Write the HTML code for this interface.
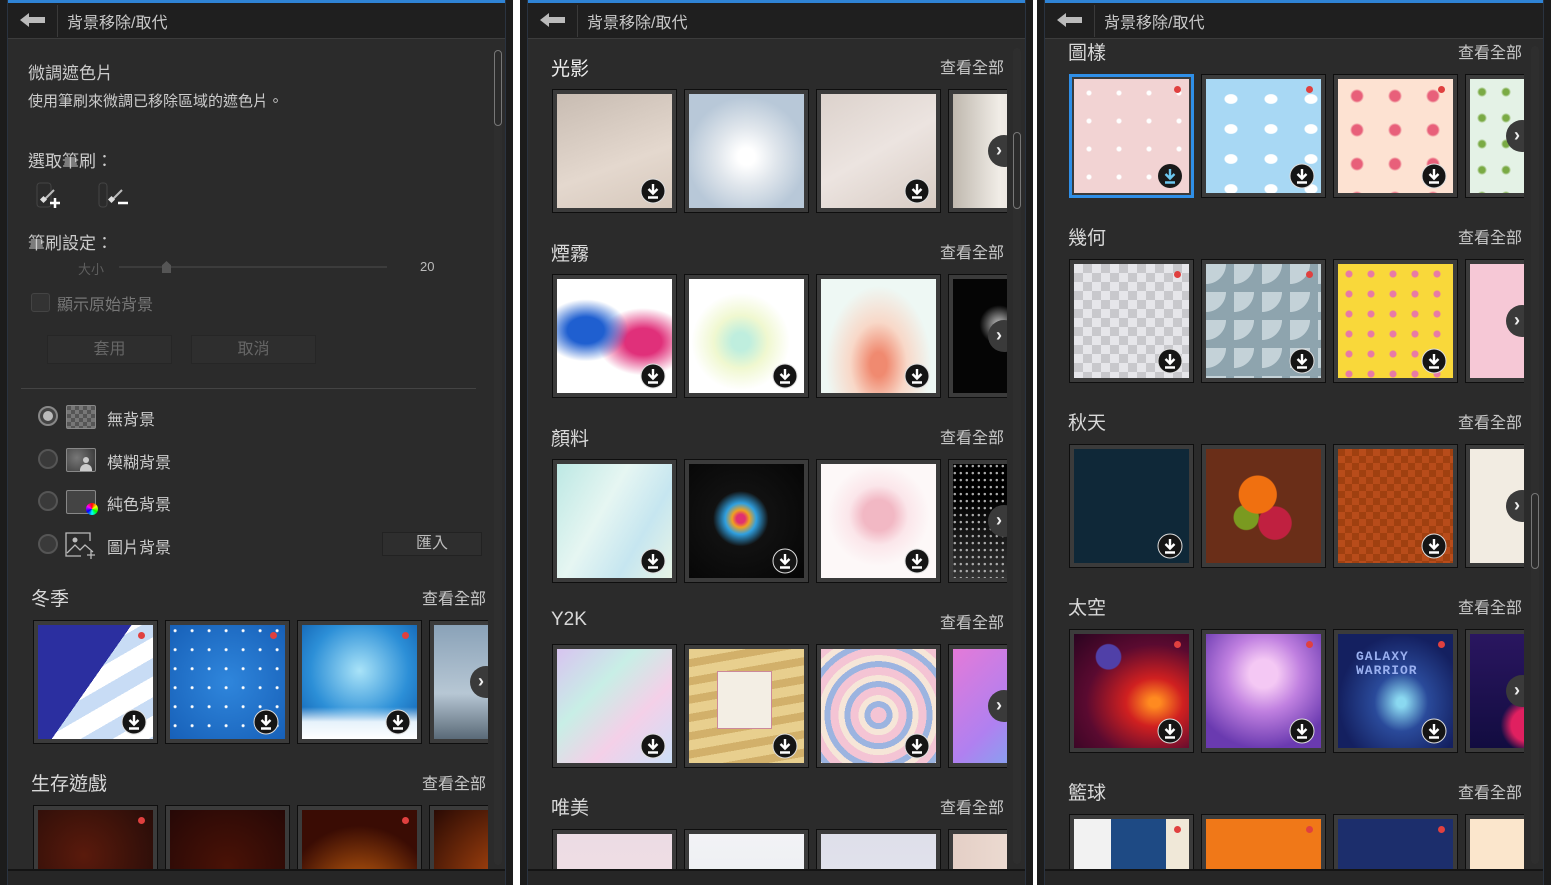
<!DOCTYPE html>
<html><head><meta charset="utf-8"><style>
*{margin:0;padding:0;box-sizing:border-box}
html,body{width:1551px;height:885px;overflow:hidden}
body{background:#fff;position:relative;font-family:"Liberation Sans","Noto Sans CJK TC",sans-serif;color:#ccc}
.p{position:absolute;top:0;height:885px;background:#1c1c1c;overflow:hidden}
.in{position:absolute;left:7px;right:7px;top:0;bottom:0;background:#2b2b2b;overflow:hidden;border-left:1px solid #2a3340;border-right:1px solid #2a3340}
.blue{position:absolute;left:0;right:0;top:0;height:3px;background:#2f84d6}
.hd{position:absolute;left:0;right:0;top:3px;height:36px;background:#1f1f1f;border-bottom:1px solid #3c3c3c}
.hd .ar{position:absolute;left:11px;top:9px}
.hd .dv{position:absolute;left:49px;top:2px;width:1px;height:32px;background:#3a3a3a}
.hd .tt{position:absolute;left:59px;top:6px;font-size:16px;color:#c8c8c8}
.bt{position:absolute;left:0;right:0;top:869px;bottom:0;background:#262626;border-top:2px solid #141414}
.sb{position:absolute;width:8px;background:#333;border-radius:4px}
.th{position:absolute;left:0;width:8px;background:#2b2b2b;border:1px solid #777;border-radius:4px}
.a{position:absolute;white-space:nowrap}
.sec{font-size:19px;color:#d8d8d8}
.all{font-size:16px;color:#c8c8c8}
.row{position:absolute;height:124px;overflow:hidden}
.t{position:absolute;top:0;width:125px;height:124px;border:1px solid #0e0e0e;background:#3b3b3b;padding:4px}
.t .i{width:100%;height:100%;position:relative;overflow:hidden}
.t.sel{border:3px solid #2f8fe8;padding:2px}
.dot{position:absolute;right:8px;top:7px;width:7px;height:7px;border-radius:50%;background:#e0403f}
.cv{position:absolute;top:46px;width:32px;height:32px;border-radius:50%;background:#3a3a3a;color:#eee;font-size:18px;line-height:30px;text-align:left;padding-left:8px;font-weight:bold}
.btn{position:absolute;height:29px;border:1px solid #262626;background:#2e2e2e;color:#666;font-size:16px;text-align:center;line-height:27px}
.rad{position:absolute;left:30px;width:20px;height:20px;border-radius:50%;border:2px solid #555;background:#3a3a3a}
</style></head><body>

<!-- PANEL 1 -->
<div class="p" style="left:0;width:513px">
<div class="in">
<div class="blue"></div>
<div class="hd"><svg class="ar" width="28" height="16" viewBox="0 0 28 16"><path d="M1 8L10 1v4h16v6H10v4z" fill="#bbb"/></svg><div class="dv"></div><div class="tt">背景移除/取代</div></div>
<div class="sb" style="left:486px;top:50px;height:815px;background:#2e2e2e"></div>
<div class="th" style="left:486px;top:50px;height:76px"></div>
<div class="a" style="left:20px;top:59px;font-size:17px;color:#ccc">微調遮色片</div>
<div class="a" style="left:20px;top:90px;font-size:15px;color:#ccc">使用筆刷來微調已移除區域的遮色片。</div>
<div class="a" style="left:20px;top:147px;font-size:17px;color:#ccc">選取筆刷：</div>
<svg class="a" style="left:28px;top:182px" width="40" height="28" viewBox="0 0 40 28"><rect x="1" y="1" width="14" height="24" rx="3" fill="none" stroke="#444"/><path d="M8 18l10-10" stroke="#bbb" stroke-width="2"/><rect x="5" y="15" width="5" height="5" fill="#ddd" transform="rotate(45 7.5 17.5)"/><path d="M14 21h10M19 16v10" stroke="#fff" stroke-width="2.5"/></svg>
<svg class="a" style="left:90px;top:182px" width="40" height="28" viewBox="0 0 40 28"><rect x="1" y="1" width="8" height="24" rx="3" fill="none" stroke="#444"/><path d="M14 18l10-10" stroke="#bbb" stroke-width="2"/><rect x="11" y="15" width="5" height="5" fill="#ddd" transform="rotate(45 13.5 17.5)"/><path d="M20 21h10" stroke="#fff" stroke-width="2.5"/></svg>
<div class="a" style="left:20px;top:229px;font-size:17px;color:#ccc">筆刷設定：</div>
<div class="a" style="left:70px;top:259px;font-size:13px;color:#5e5e5e">大小</div>
<div class="a" style="left:111px;top:266px;width:268px;height:2px;background:#3c3c3c"></div>
<div class="a" style="left:154px;top:261px;width:9px;height:12px;background:#555;clip-path:polygon(50% 0,100% 35%,100% 100%,0 100%,0 35%)"></div>
<div class="a" style="left:412px;top:259px;font-size:13px;color:#bbb">20</div>
<div class="a" style="left:23px;top:293px;width:19px;height:19px;border:1px solid #444;background:#333;border-radius:3px"></div>
<div class="a" style="left:49px;top:291px;font-size:16px;color:#777">顯示原始背景</div>
<div class="btn" style="left:39px;top:335px;width:125px">套用</div>
<div class="btn" style="left:183px;top:335px;width:125px">取消</div>
<div class="a" style="left:13px;top:388px;width:455px;height:1px;background:#444"></div>

<div class="rad" style="top:406px;border-color:#888;background:#444"><div style="margin:3px;width:10px;height:10px;border-radius:50%;background:#bbb"></div></div>
<div class="a" style="left:58px;top:405px;width:30px;height:24px;border:1px solid #888;border-radius:2px;background:repeating-conic-gradient(#777 0 25%,#555 0 50%) 0 0/8px 8px"></div>
<div class="a" style="left:99px;top:406px;font-size:16px;color:#ccc">無背景</div>

<div class="rad" style="top:449px"></div>
<div class="a" style="left:58px;top:448px;width:30px;height:24px;border:1px solid #888;border-radius:2px;background:radial-gradient(circle at 35% 40%,#777,#333)"><div style="position:absolute;right:3px;bottom:0;width:12px;height:7px;border-radius:6px 6px 0 0;background:#ccc"></div><div style="position:absolute;right:6px;bottom:8px;width:6px;height:6px;border-radius:50%;background:#ccc"></div></div>
<div class="a" style="left:99px;top:449px;font-size:16px;color:#ccc">模糊背景</div>

<div class="rad" style="top:491px"></div>
<div class="a" style="left:58px;top:490px;width:30px;height:24px;border:1px solid #888;border-radius:2px;background:#444"></div>
<div class="a" style="left:78px;top:503px;width:12px;height:12px;border-radius:50%;background:conic-gradient(red,yellow,lime,cyan,blue,magenta,red)"></div>
<div class="a" style="left:99px;top:491px;font-size:16px;color:#ccc">純色背景</div>

<div class="rad" style="top:534px"></div>
<svg class="a" style="left:57px;top:532px" width="32" height="28" viewBox="0 0 32 28"><path d="M25 9V1H1v23h15" fill="none" stroke="#bbb" stroke-width="1.3"/><circle cx="10" cy="8" r="2.5" fill="#bbb"/><path d="M2 21l8-8 5 5 5-5 8 7" fill="none" stroke="#bbb" stroke-width="1.3"/><path d="M26 19v8M22 23h8" stroke="#bbb" stroke-width="1.3"/></svg>
<div class="a" style="left:99px;top:534px;font-size:16px;color:#ccc">圖片背景</div>
<div class="btn" style="left:374px;top:532px;width:100px;height:24px;line-height:22px;color:#bbb;border-color:#222;background:#2e2e2e">匯入</div>

<div class="a sec" style="left:23px;top:584px">冬季</div>
<div class="a all" style="right:19px;top:585px">查看全部</div>
<div class="row" style="left:25px;top:620px;width:455px">
 <div class="t" style="left:0"><div class="i" style="background:linear-gradient(125deg,#2b2fa0 48%,transparent 48%),repeating-linear-gradient(150deg,#fff 0 18px,#c8dcf5 18px 34px)"><div class="dot"></div></div></div>
 <div class="t" style="left:132px"><div class="i" style="background:radial-gradient(circle at 30% 30%,#fff 1px,transparent 2px) 0 0/17px 19px,radial-gradient(circle,#2f86dc,#1760b8)"><div class="dot"></div></div></div>
 <div class="t" style="left:264px"><div class="i" style="background:linear-gradient(transparent 72%,#e6f2fb 85%,#fff),radial-gradient(circle at 50% 40%,#a9e3f8,#2c8fd7 55%,#0a55a8)"><div class="dot"></div></div></div>
 <div class="t" style="left:396px"><div class="i" style="background:linear-gradient(#8aa2b8,#b7c7d4 60%,#5a6a78)"></div></div>
 <div class="cv" style="left:437px">›</div>
</div>
<div class="a sec" style="left:23px;top:769px">生存遊戲</div>
<div class="a all" style="right:19px;top:770px">查看全部</div>
<div class="row" style="left:25px;top:805px;width:455px">
 <div class="t" style="left:0"><div class="i" style="background:radial-gradient(circle at 40% 40%,#5a1a0c,#1e0a08)"><div class="dot"></div></div></div>
 <div class="t" style="left:132px"><div class="i" style="background:radial-gradient(#4a1206,#260806)"></div></div>
 <div class="t" style="left:264px"><div class="i" style="background:radial-gradient(circle at 50% 80%,#d66a10,#3a0c04 70%)"><div class="dot"></div></div></div>
 <div class="t" style="left:396px"><div class="i" style="background:radial-gradient(circle at 70% 70%,#c25010,#2a0a04)"></div></div>
</div>
<div class="bt"></div>
</div></div>

<!-- PANEL 2 -->
<div class="p" style="left:520px;width:513px">
<div class="in">
<div class="blue"></div>
<div class="hd"><svg class="ar" width="28" height="16" viewBox="0 0 28 16"><path d="M1 8L10 1v4h16v6H10v4z" fill="#bbb"/></svg><div class="dv"></div><div class="tt">背景移除/取代</div></div>
<div class="sb" style="left:485px;top:48px;height:816px;background:#2e2e2e"></div>
<div class="th" style="left:485px;top:132px;height:77px"></div>

<div class="a sec" style="left:23px;top:54px;color:#eee">光影</div>
<div class="a all" style="right:21px;top:54px">查看全部</div>
<div class="row" style="left:24px;top:89px;width:455px">
 <div class="t" style="left:0"><div class="i" style="background:linear-gradient(160deg,#c8bcb2,#e4d8ce 60%,#d6c8bc)"></div></div>
 <div class="t" style="left:132px"><div class="i" style="background:radial-gradient(circle at 50% 55%,#fff 10%,#e0e6ec 35%,#b8c8d8 70%)"></div></div>
 <div class="t" style="left:264px"><div class="i" style="background:linear-gradient(150deg,#dcd2cc,#ece4e0 50%,#d8ccc4)"></div></div>
 <div class="t" style="left:396px"><div class="i" style="background:linear-gradient(90deg,#bfb8ae,#f0ece6 40%,#cfc8bc)"></div></div>
 <div class="cv" style="left:436px">›</div>
</div>

<div class="a sec" style="left:23px;top:239px">煙霧</div>
<div class="a all" style="right:21px;top:239px">查看全部</div>
<div class="row" style="left:24px;top:274px;width:455px">
 <div class="t" style="left:0"><div class="i" style="background:radial-gradient(ellipse at 25% 45%,#1f5fd0 15%,transparent 35%),radial-gradient(ellipse at 75% 55%,#e0307a 15%,transparent 38%),#fff"></div></div>
 <div class="t" style="left:132px"><div class="i" style="background:radial-gradient(ellipse at 45% 55%,#bfeede 10%,#f0f8d0 30%,#fff 55%)"></div></div>
 <div class="t" style="left:264px"><div class="i" style="background:radial-gradient(ellipse at 50% 75%,#f08a70 10%,#f8d8c8 35%,#eef8f4 65%)"></div></div>
 <div class="t" style="left:396px"><div class="i" style="background:radial-gradient(circle at 40% 40%,#aaa 3%,#050505 20%)"></div></div>
 <div class="cv" style="left:436px">›</div>
</div>

<div class="a sec" style="left:23px;top:424px">顏料</div>
<div class="a all" style="right:21px;top:424px">查看全部</div>
<div class="row" style="left:24px;top:459px;width:455px">
 <div class="t" style="left:0"><div class="i" style="background:linear-gradient(120deg,#bde8e4,#e6f6f2 40%,#c6e6f0 70%,#e8f4e6)"></div></div>
 <div class="t" style="left:132px"><div class="i" style="background:radial-gradient(circle at 45% 48%,#e03070 5%,#f0a020 10%,#30a0e0 18%,#111 32%,#050505)"></div></div>
 <div class="t" style="left:264px"><div class="i" style="background:radial-gradient(circle at 50% 45%,#f2b8c4 18%,#fbe6ea 35%,#fdf8f8 60%)"></div></div>
 <div class="t" style="left:396px"><div class="i" style="background:radial-gradient(circle at 30% 30%,#aaa 1px,transparent 1.5px) 0 0/6px 7px,linear-gradient(#000 30%,#333)"></div></div>
 <div class="cv" style="left:436px">›</div>
</div>

<div class="a sec" style="left:23px;top:609px">Y2K</div>
<div class="a all" style="right:21px;top:609px">查看全部</div>
<div class="row" style="left:24px;top:644px;width:455px">
 <div class="t" style="left:0"><div class="i" style="background:linear-gradient(135deg,#d8c4f0,#c8eee6 35%,#f4d0e8 65%,#cde0f8)"></div></div>
 <div class="t" style="left:132px"><div class="i" style="background:repeating-linear-gradient(170deg,#e8cf8e 0 10px,#d2b06a 10px 18px)"><div style="position:absolute;left:28px;top:22px;width:55px;height:58px;background:#f3eee4;border:1px solid #c89;"></div></div></div>
 <div class="t" style="left:264px"><div class="i" style="background:repeating-radial-gradient(circle at 50% 58%,#f4c4d4 0 8px,#9cb4e0 8px 14px,#f6e6d8 14px 20px)"></div></div>
 <div class="t" style="left:396px"><div class="i" style="background:linear-gradient(135deg,#e47ad8,#b080f0 50%,#60c0f0)"></div></div>
 <div class="cv" style="left:436px">›</div>
</div>

<div class="a sec" style="left:23px;top:793px">唯美</div>
<div class="a all" style="right:21px;top:794px">查看全部</div>
<div class="row" style="left:24px;top:829px;width:455px">
 <div class="t" style="left:0"><div class="i" style="background:linear-gradient(#ecdce4,#f4e0e4)"></div></div>
 <div class="t" style="left:132px"><div class="i" style="background:linear-gradient(#f2f3f6,#e6e8ec)"></div></div>
 <div class="t" style="left:264px"><div class="i" style="background:linear-gradient(#dedfea,#e8e8f0)"></div></div>
 <div class="t" style="left:396px"><div class="i" style="background:linear-gradient(90deg,#e4cfc6,#f4e6dc)"></div></div>
</div>
<div class="bt"></div>
</div></div>

<!-- PANEL 3 -->
<div class="p" style="left:1037px;width:514px">
<div class="in">
<div class="blue"></div>
<div class="hd"><svg class="ar" width="28" height="16" viewBox="0 0 28 16"><path d="M1 8L10 1v4h16v6H10v4z" fill="#bbb"/></svg><div class="dv"></div><div class="tt">背景移除/取代</div></div>
<div class="sb" style="left:486px;top:46px;height:818px;background:#2e2e2e"></div>
<div class="th" style="left:486px;top:493px;height:76px"></div>

<div class="a sec" style="left:23px;top:38px">圖樣</div>
<div class="a all" style="right:21px;top:39px">查看全部</div>
<div class="row" style="left:24px;top:74px;width:455px">
 <div class="t sel" style="left:0"><div class="i" style="background:radial-gradient(circle,#fff 2px,transparent 3px) 0 0/30px 28px,#f2d3d3"><div class="dot"></div></div></div>
 <div class="t" style="left:132px"><div class="i" style="background:radial-gradient(ellipse,#fff 6px,transparent 7px) 5px 5px/40px 30px,#a8d8f4"><div class="dot"></div></div></div>
 <div class="t" style="left:264px"><div class="i" style="background:radial-gradient(circle,#e8607a 5px,transparent 7px) 0 0/38px 34px,#fde2d2"><div class="dot"></div></div></div>
 <div class="t" style="left:396px"><div class="i" style="background:radial-gradient(circle,#7aaa44 3px,transparent 5px) 0 0/24px 26px,#e4f2e6"></div></div>
 <div class="cv" style="left:437px">›</div>
</div>

<div class="a sec" style="left:23px;top:223px">幾何</div>
<div class="a all" style="right:21px;top:224px">查看全部</div>
<div class="row" style="left:24px;top:259px;width:455px">
 <div class="t" style="left:0"><div class="i" style="background:repeating-conic-gradient(#c8c8cc 0 25%,#e6e6ea 0 50%) 0 0/18px 18px"><div class="dot"></div></div></div>
 <div class="t" style="left:132px"><div class="i" style="background:radial-gradient(circle at 0 0,#c4d2d8 50%,transparent 51%) 0 0/28px 28px,#8ea4ae"><div class="dot"></div></div></div>
 <div class="t" style="left:264px"><div class="i" style="background:radial-gradient(circle,#e87aa6 3px,transparent 4px) 0 0/22px 20px,#f9d83a"></div></div>
 <div class="t" style="left:396px"><div class="i" style="background:#f6c8d6"></div></div>
 <div class="cv" style="left:437px">›</div>
</div>

<div class="a sec" style="left:23px;top:408px">秋天</div>
<div class="a all" style="right:21px;top:409px">查看全部</div>
<div class="row" style="left:24px;top:444px;width:455px">
 <div class="t" style="left:0"><div class="i" style="background:#0f2838"></div></div>
 <div class="t" style="left:132px"><div class="i" style="background:radial-gradient(circle at 45% 40%,#f07010 20%,transparent 21%),radial-gradient(circle at 60% 65%,#c02040 16%,transparent 17%),radial-gradient(circle at 35% 60%,#7a9a20 12%,transparent 13%),#6a2e18"></div></div>
 <div class="t" style="left:264px"><div class="i" style="background:repeating-conic-gradient(#b84c1a 0 25%,#a04010 0 50%) 0 0/14px 14px"></div></div>
 <div class="t" style="left:396px"><div class="i" style="background:#f2ece2"></div></div>
 <div class="cv" style="left:437px">›</div>
</div>

<div class="a sec" style="left:23px;top:593px">太空</div>
<div class="a all" style="right:21px;top:594px">查看全部</div>
<div class="row" style="left:24px;top:629px;width:455px">
 <div class="t" style="left:0"><div class="i" style="background:radial-gradient(circle at 30% 20%,#5040a8 10%,transparent 11%),radial-gradient(ellipse at 70% 60%,#ff8a20 5%,#d02020 25%,#5a0a30 60%,#2a0420)"><div class="dot"></div></div></div>
 <div class="t" style="left:132px"><div class="i" style="background:radial-gradient(circle at 50% 35%,#f4c8f4 15%,#c080e0 40%,#6a3ab0 80%)"><div class="dot"></div></div></div>
 <div class="t" style="left:264px"><div class="i" style="background:radial-gradient(ellipse at 55% 60%,#8ad8f0 5%,#2a4a9a 30%,#142060 70%)"><div class="dot"></div><div style="position:absolute;left:18px;top:16px;font:bold 13px 'Liberation Mono',monospace;color:#9ab0f0;line-height:14px;letter-spacing:1px">GALAXY<br>WARRIOR</div></div></div>
 <div class="t" style="left:396px"><div class="i" style="background:radial-gradient(circle at 50% 80%,#e02060 15%,transparent 25%),linear-gradient(#2a1660,#120c40)"></div></div>
 <div class="cv" style="left:437px">›</div>
</div>

<div class="a sec" style="left:23px;top:778px">籃球</div>
<div class="a all" style="right:21px;top:779px">查看全部</div>
<div class="row" style="left:24px;top:814px;width:455px">
 <div class="t" style="left:0"><div class="i" style="background:linear-gradient(90deg,#f2f2f2 32%,#1e4a84 32%,#1e4a84 80%,#f0e8d8 80%)"><div class="dot"></div></div></div>
 <div class="t" style="left:132px"><div class="i" style="background:#f07818"><div class="dot"></div></div></div>
 <div class="t" style="left:264px"><div class="i" style="background:#1c2e6c"><div class="dot"></div></div></div>
 <div class="t" style="left:396px"><div class="i" style="background:#fbe6cc"></div></div>
</div>
<div class="bt"></div>
</div></div>

<svg width="0" height="0" style="position:absolute"><defs><g id="dl"><circle cx="13" cy="13" r="12" fill="#151515" stroke="#ddd" stroke-width="1"/><path d="M13 6v9M8.5 11l4.5 4.5 4.5-4.5M8 19.5h10" fill="none" stroke="#fff" stroke-width="2.4"/></g><g id="dlb"><circle cx="13" cy="13" r="12" fill="#1a1a1a"/><path d="M13 6v9M8.5 11l4.5 4.5 4.5-4.5M8 19.5h10" fill="none" stroke="#6cc8f0" stroke-width="2.4"/></g></defs></svg>
<svg class="a" style="left:0;top:0;pointer-events:none" width="1551" height="885">
<use href="#dl" x="121" y="709"/><use href="#dl" x="253" y="709"/><use href="#dl" x="385" y="709"/>
<use href="#dl" x="640" y="178"/><use href="#dl" x="904" y="178"/>
<use href="#dl" x="640" y="363"/><use href="#dl" x="772" y="363"/><use href="#dl" x="904" y="363"/>
<use href="#dl" x="640" y="548"/><use href="#dl" x="772" y="548"/><use href="#dl" x="904" y="548"/>
<use href="#dl" x="640" y="733"/><use href="#dl" x="772" y="733"/><use href="#dl" x="904" y="733"/>
<use href="#dlb" x="1157" y="163"/><use href="#dl" x="1289" y="163"/><use href="#dl" x="1421" y="163"/>
<use href="#dl" x="1157" y="348"/><use href="#dl" x="1289" y="348"/><use href="#dl" x="1421" y="348"/>
<use href="#dl" x="1157" y="533"/><use href="#dl" x="1421" y="533"/>
<use href="#dl" x="1157" y="718"/><use href="#dl" x="1289" y="718"/><use href="#dl" x="1421" y="718"/>
</svg>
</body></html>
